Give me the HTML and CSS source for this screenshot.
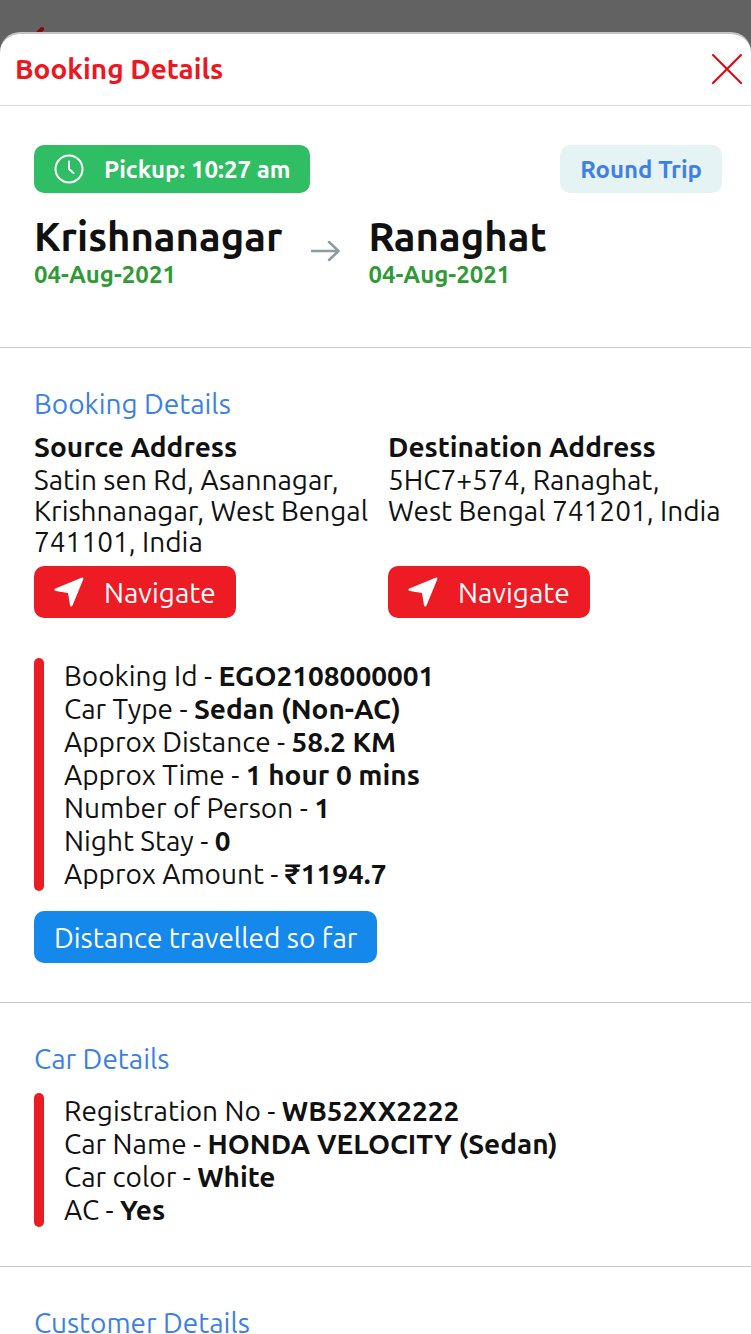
FILE: index.html
```html
<!DOCTYPE html>
<html lang="en">
<head>
    <meta charset="UTF-8">
    <meta name="viewport" content="width=device-width, initial-scale=1.0">
    <title>Booking Details</title>
    <link rel="stylesheet" href="styles.css">
</head>
<body>
    <div class="backdrop">
        <svg class="back-icon" width="14" height="12" viewBox="0 0 14 12"><path d="M11 3L2 12" stroke="#7c0a0e" stroke-width="4" stroke-linecap="round"/></svg>
    </div>

    <main class="sheet">
        <header class="sheet-header">
            <h1>Booking Details</h1>
            <button class="close" type="button" aria-label="Close">
                <svg width="30" height="30" viewBox="0 0 30 30"><path d="M1 1L29 29M29 1L1 29" stroke="#e9000b" stroke-width="2" stroke-linecap="round"/></svg>
            </button>
        </header>

        <section class="section trip">
            <div class="badges">
                <span class="badge pickup">
                    <svg width="30" height="30" viewBox="0 0 30 30" fill="none" stroke="#fff" stroke-width="2" stroke-linecap="round" stroke-linejoin="round"><circle cx="15" cy="15" r="13.5"/><path d="M15 7.500V15L19.500 19"/></svg>
                    Pickup: 10:27 am
                </span>
                <span class="badge trip-type">Round Trip</span>
            </div>
            <div class="route">
                <div>
                    <h2 class="city">Krishnanagar</h2>
                    <p class="date">04-Aug-2021</p>
                </div>
                <svg class="arrow" width="30" height="22" viewBox="0 0 30 22" fill="none" stroke="#8f9ba2" stroke-width="2.500" stroke-linecap="round" stroke-linejoin="round"><path d="M2 11H28.500M19 2L28.500 11L19 20"/></svg>
                <div>
                    <h2 class="city">Ranaghat</h2>
                    <p class="date">04-Aug-2021</p>
                </div>
            </div>
        </section>

        <section class="section">
            <h2 class="section-title">Booking Details</h2>
            <div class="addresses">
                <div class="address">
                    <h3>Source Address</h3>
                    <p>Satin sen Rd, Asannagar, Krishnanagar, West Bengal 741101, India</p>
                    <button class="btn navigate" type="button">
                        <svg width="30" height="30" viewBox="0 0 30 30"><path d="M27.500 .8C28.900 .2 29.800 1 29.200 2.400L18.500 28.600C17.900 30 16.300 29.800 16 28.300L14 16L1.700 14C.2 13.700 0 12.100 1.400 11.500Z" fill="#fff"/></svg>
                        Navigate
                    </button>
                </div>
                <div class="address">
                    <h3>Destination Address</h3>
                    <p>5HC7+574, Ranaghat, West Bengal 741201, India</p>
                    <button class="btn navigate" type="button">
                        <svg width="30" height="30" viewBox="0 0 30 30"><path d="M27.500 .8C28.900 .2 29.800 1 29.200 2.400L18.500 28.600C17.900 30 16.300 29.800 16 28.300L14 16L1.700 14C.2 13.700 0 12.100 1.400 11.500Z" fill="#fff"/></svg>
                        Navigate
                    </button>
                </div>
            </div>
            <ul class="details">
                <li>Booking Id - <b>EGO2108000001</b></li>
                <li>Car Type - <b>Sedan (Non-AC)</b></li>
                <li>Approx Distance - <b>58.2 KM</b></li>
                <li>Approx Time - <b>1 hour 0 mins</b></li>
                <li>Number of Person - <b>1</b></li>
                <li>Night Stay - <b>0</b></li>
                <li>Approx Amount - <b>₹1194.7</b></li>
            </ul>
            <button class="btn distance" type="button">Distance travelled so far</button>
        </section>

        <section class="section">
            <h2 class="section-title">Car Details</h2>
            <ul class="details car">
                <li>Registration No - <b>WB52XX2222</b></li>
                <li>Car Name - <b>HONDA VELOCITY (Sedan)</b></li>
                <li>Car color - <b>White</b></li>
                <li>AC - <b>Yes</b></li>
            </ul>
        </section>

        <section class="section">
            <h2 class="section-title">Customer Details</h2>
        </section>
    </main>
</body>
</html>
```
FILE: styles.css
```css
* {
    box-sizing: border-box;
    margin: 0;
    padding: 0;
}

body {
    font-family: Ubuntu, "Noto Sans", sans-serif;
    font-size: 28px;
    color: #111;
    background-color: #626262;
    height: 100vh;
    display: flex;
    flex-direction: column;
    overflow: hidden;
}

svg {
    display: block;
    flex-shrink: 0;
}

.backdrop {
    height: 32px;
    flex-shrink: 0;
    display: flex;
    align-items: flex-end;
    padding-left: 31px;
}

.back-icon {
    margin-bottom: -6px;
}

.sheet {
    flex: 1;
    overflow-y: auto;
    scrollbar-width: none;
    background-color: #fff;
    border-top: 2px solid #c4c4c4;
    border-radius: 20px 20px 0 0;
    position: relative;
}

.sheet-header {
    display: flex;
    justify-content: space-between;
    align-items: center;
    height: 72px;
    padding: 0 9px 2px 15px;
    border-bottom: 1px solid #ddd;
}

.sheet-header h1 {
    font-size: 28px;
    color: #ee1620;
}

.close {
    border: none;
    background: none;
    cursor: pointer;
}

.section {
    padding: 40px 29px 39px 34px;
    border-bottom: 1px solid #ccc;
}

.section:last-child {
    border-bottom: none;
}

.trip {
    padding-top: 39px;
    padding-bottom: 58px;
}

.badges {
    display: flex;
    justify-content: space-between;
}

.badge {
    display: flex;
    align-items: center;
    gap: 20px;
    height: 48px;
    padding: 0 20px;
    border-radius: 10px;
    font-size: 24px;
    font-weight: bold;
}

.pickup {
    color: #fff;
    background-color: #30be65;
}

.trip-type {
    color: #3f80e8;
    background-color: #e5f3f4;
}

.route {
    display: flex;
    align-items: center;
    gap: 28px;
    margin-top: 20px;
}

.city {
    font-size: 40px;
    line-height: 48px;
}

.date {
    font-size: 24px;
    font-weight: bold;
    line-height: 28px;
    color: #309a37;
}

.section-title {
    font-size: 28px;
    font-weight: normal;
    line-height: 32px;
    color: #3b7fe8;
}

.addresses {
    display: grid;
    grid-template-columns: 1fr 1fr;
    gap: 16px;
    margin: 10px -4px 0 0;
}

.address {
    display: flex;
    flex-direction: column;
    align-items: flex-start;
}

.address h3 {
    font-size: 28px;
    line-height: 34px;
}

.address p {
    flex: 1;
    line-height: 31px;
}

.btn {
    display: flex;
    align-items: center;
    gap: 20px;
    height: 52px;
    padding: 0 20px;
    border: none;
    border-radius: 10px;
    font-family: inherit;
    font-size: 28px;
    color: #fff;
    cursor: pointer;
}

.navigate {
    margin-top: 9px;
    background-color: #ed1b24;
}

.distance {
    background-color: #1488eb;
}

.details {
    position: relative;
    list-style: none;
    margin: 40px 0 20px;
    padding: 1px 0 1px 30px;
    line-height: 33px;
}

/* red bar on the left */
.details::before {
    content: "";
    position: absolute;
    top: 0;
    bottom: 0;
    left: 0;
    width: 10px;
    border-radius: 5px;
    background-color: #ed1b24;
}

.car {
    margin: 18px 0 0;
}
```
